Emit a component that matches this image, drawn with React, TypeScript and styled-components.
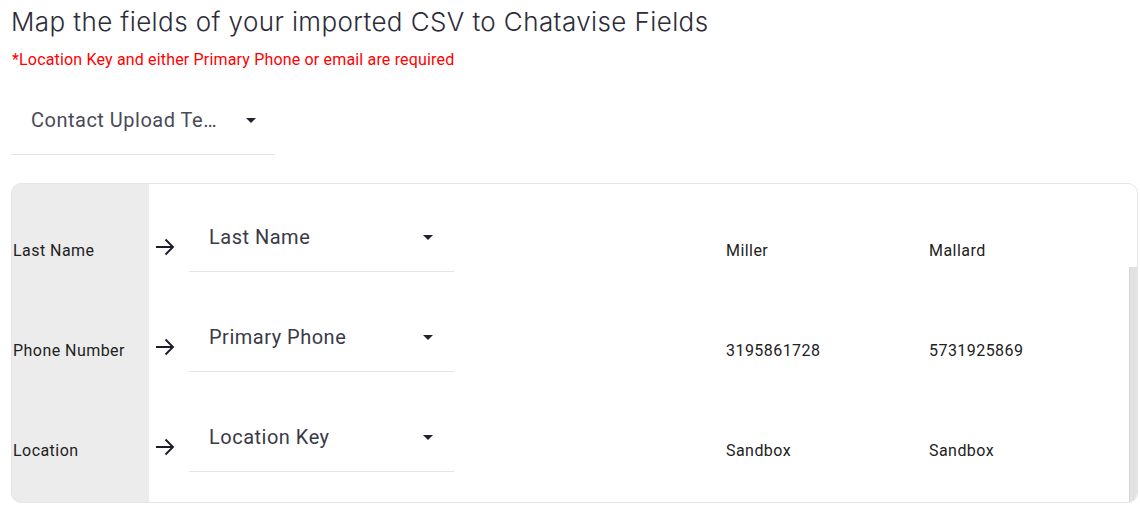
import React from "react";
import styled, { createGlobalStyle } from "styled-components";

const GlobalStyle = createGlobalStyle`
  body {
    margin: 0;
    background: #fff;
    font-family: Roboto, "Liberation Sans", sans-serif;
  }
`;

const Page = styled.div`
  padding: 7px 2px 0 11px;
`;

const Title = styled.h1`
  margin: 0;
  font-family: Inter, "Noto Sans", sans-serif;
  font-weight: 300;
  font-size: 26px;
  line-height: 30px;
  letter-spacing: 0.4px;
  color: #2c2c38;
`;

const Required = styled.p`
  margin: 14px 0 0 1px;
  font-size: 16px;
  line-height: 18px;
  letter-spacing: 0.17px;
  color: #ff0000;
`;

const Select = styled.div<{ $width: number; $height?: number; $textWidth?: number }>`
  display: flex;
  align-items: flex-start;
  justify-content: space-between;
  box-sizing: border-box;
  width: ${(p) => p.$width}px;
  height: ${(p) => p.$height ?? 72}px;
  padding: 0 21px 0 20px;
  border-bottom: 1px solid #e4e4e4;
  font-size: 20px;
  line-height: 24px;
  letter-spacing: 0.5px;
  color: #3a3a48;

  span:first-child {
    max-width: ${(p) => p.$textWidth ?? 200}px;
  }
`;

const TopSelect = styled(Select)`
  margin-top: 17px;
  padding-top: 22px;
  padding-right: 19px;
  color: #4a4a58;
`;

const CellSelect = styled(Select)`
  align-self: flex-start;
  padding-top: 25px;
`;

const SelectText = styled.span`
  min-width: 0;
  overflow: hidden;
  white-space: nowrap;
  text-overflow: ellipsis;
`;

const Caret = styled.span`
  flex: none;
  width: 0;
  height: 0;
  margin-top: 10px;
  border-left: 5.5px solid transparent;
  border-right: 5.5px solid transparent;
  border-top: 5.5px solid #22222e;
`;

const Table = styled.div`
  position: relative;
  margin-top: 28px;
  width: 1127px;
  box-sizing: border-box;
  padding: 16px 0 2px;
  border: 1px solid #e6e6e6;
  border-radius: 10px;
  overflow: hidden;
  background: linear-gradient(to right, #ececec 137px, #fff 137px);
`;

const Row = styled.div`
  display: grid;
  grid-template-columns: 137px 40px 265px 272px 203px 1fr;
  align-items: center;
  height: 100px;
  font-size: 16px;
  letter-spacing: 0.45px;
  color: #222;
`;

const Label = styled.div`
  padding-left: 1px;
`;

const ArrowCell = styled.div`
  display: flex;
  padding-left: 6px;
  margin-top: -6px;
`;

const Value = styled.div``;

const Scrollbar = styled.div`
  position: absolute;
  right: 0;
  top: 83px;
  bottom: 0;
  width: 7px;
  background: #e2e2e2;
  border-left: 1px solid #d6d6d6;
`;

const Arrow = () => (
  <svg width="20" height="18" viewBox="0 0 20 18" fill="none">
    <path d="M1 9H18.5M10.5 1.5L18 9L10.5 16.5" stroke="#1c1c28" strokeWidth="1.9" />
  </svg>
);

const rows = [
  { label: "Last Name", field: "Last Name", values: ["Miller", "Mallard"] },
  { label: "Phone Number", field: "Primary Phone", values: ["3195861728", "5731925869"] },
  { label: "Location", field: "Location Key", values: ["Sandbox", "Sandbox"] },
];

export default function App() {
  return (
    <Page>
      <GlobalStyle />
      <Title>Map the fields of your imported CSV to Chatavise Fields</Title>
      <Required>*Location Key and either Primary Phone or email are required</Required>
      <TopSelect $width={264} $height={69} $textWidth={190}>
        <SelectText>Contact Upload Template</SelectText>
        <Caret />
      </TopSelect>
      <Table>
        {rows.map((r) => (
          <Row key={r.label}>
            <Label>{r.label}</Label>
            <ArrowCell>
              <Arrow />
            </ArrowCell>
            <CellSelect $width={265}>
              <SelectText>{r.field}</SelectText>
              <Caret />
            </CellSelect>
            <div />
            <Value>{r.values[0]}</Value>
            <Value>{r.values[1]}</Value>
          </Row>
        ))}
        <Scrollbar />
      </Table>
    </Page>
  );
}
